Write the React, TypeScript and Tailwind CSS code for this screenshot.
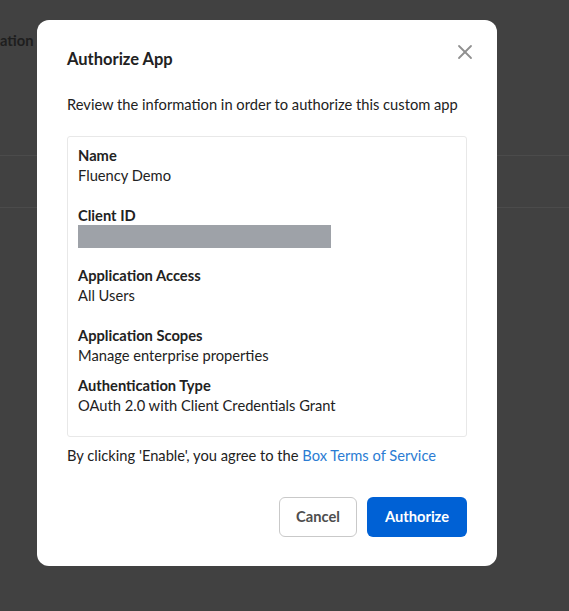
import { X } from "lucide-react";

const fields = [
  { label: "Name", value: "Fluency Demo", gap: "mb-5" },
  { label: "Client ID", value: null, gap: "mb-[17px]" },
  { label: "Application Access", value: "All Users", gap: "mb-5" },
  { label: "Application Scopes", value: "Manage enterprise properties", gap: "mb-[10px]" },
  { label: "Authentication Type", value: "OAuth 2.0 with Client Credentials Grant", gap: "" },
];

function Backdrop() {
  // dimmed page behind the modal
  return (
    <div className="min-h-[611px] bg-[#414141] pt-[30px]">
      <div className="h-5 whitespace-nowrap text-[14.7px] font-bold leading-5 text-[#1e1e1e]">ation</div>
      <div className="mt-[105px] h-px bg-[#4b4b4b]" />
      <div className="mt-[51px] h-px bg-[#4b4b4b]" />
    </div>
  );
}

export default function App() {
  return (
    <div className="relative h-[611px] w-full overflow-hidden font-['Lato',sans-serif]">
      <Backdrop />
      <div className="absolute left-[37px] top-[20px] flex h-[546px] w-[460px] flex-col rounded-xl bg-white px-[30px] pt-[29px] pb-[29px] text-[#222]">
        <button className="absolute right-[20px] top-[20px] text-[#909090]">
          <X size={24} strokeWidth={1.8} />
        </button>
        <h2 className="text-[16.5px] font-bold leading-5">Authorize App</h2>
        <p className="mt-[25px] text-[14.7px] leading-5">
          Review the information in order to authorize this custom app
        </p>
        <div className="mt-[22px] rounded-[3px] border border-[#e8e8e8] px-[10px] pt-[8px] pb-[21px]">
          {fields.map((f) => (
            <div key={f.label} className={f.gap}>
              <div className="text-[14.7px] font-bold leading-5">{f.label}</div>
              {f.value ? (
                <div className="text-[14.7px] leading-5">{f.value}</div>
              ) : (
                <div className="h-[23px] w-[253px] bg-[#9ea2a8]" />
              )}
            </div>
          ))}
        </div>
        <p className="mt-[8px] text-[14.7px] leading-5">
          By clicking 'Enable', you agree to the{" "}
          <a className="text-[#2b7cd3]">Box Terms of Service</a>
        </p>
        <div className="mt-auto flex justify-end gap-[10px]">
          <button className="h-10 w-[78px] rounded-md border border-[#c9c9c9] bg-white pb-px text-[14.7px] font-bold text-[#4e4e4e]">
            Cancel
          </button>
          <button className="h-10 w-[100px] rounded-md bg-[#0061d5] pb-px text-[14.7px] font-bold text-white">
            Authorize
          </button>
        </div>
      </div>
    </div>
  );
}
